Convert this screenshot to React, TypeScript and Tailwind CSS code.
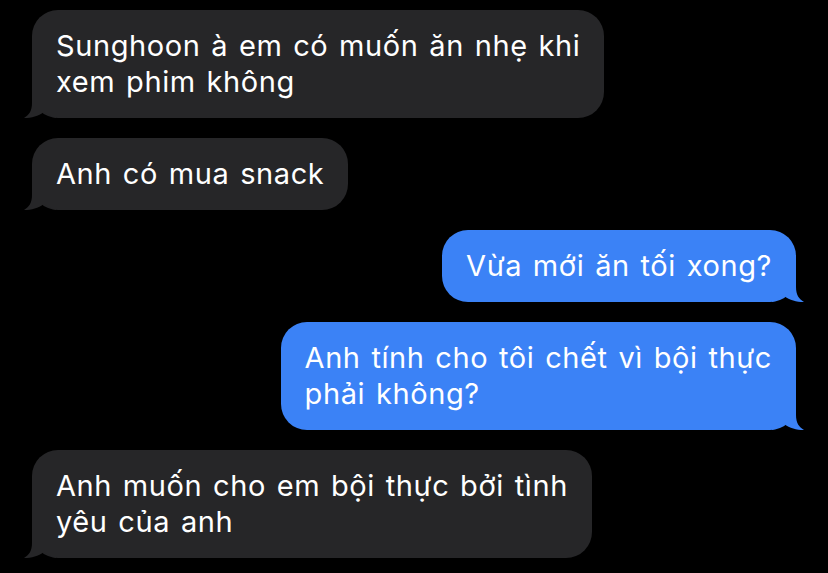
// iMessage-style dark chat thread

type Msg = { from: "them" | "me"; text: string[] };

const messages: Msg[] = [
  { from: "them", text: ["Sunghoon à em có muốn ăn nhẹ khi", "xem phim không"] },
  { from: "them", text: ["Anh có mua snack"] },
  { from: "me", text: ["Vừa mới ăn tối xong?"] },
  { from: "me", text: ["Anh tính cho tôi chết vì bội thực", "phải không?"] },
  { from: "them", text: ["Anh muốn cho em bội thực bởi tình", "yêu của anh"] },
];

function Tail({ color, flip }: { color: string; flip?: boolean }) {
  return (
    <svg
      width="32"
      height="32"
      viewBox="0 0 32 32"
      className={
        flip
          ? "absolute -right-2 bottom-0 -scale-x-100"
          : "absolute -left-2 bottom-0"
      }
    >
      <path
        d="M8 0 L8 17 C8 25 5 29 0 32 C8 32 14 30 20 26 C24 29 28 31 32 32 L32 0 Z"
        fill={color}
      />
    </svg>
  );
}

function Bubble({ msg }: { msg: Msg }) {
  const mine = msg.from === "me";
  const color = mine ? "#3b82f6" : "#262628";
  return (
    <div className={mine ? "flex justify-end pr-8" : "flex justify-start pl-8"}>
      <div
        className={
          mine
            ? "relative rounded-[26px] bg-[#3b82f6] px-6 py-[18px]"
            : "relative rounded-[26px] bg-[#262628] px-6 py-[18px]"
        }
      >
        <Tail color={color} flip={mine} />
        <div className="relative text-[29px] leading-[36px] tracking-[0.6px] [word-spacing:2px] text-white">
          {msg.text.map((line) => (
            <div key={line} className="whitespace-nowrap">
              {line}
            </div>
          ))}
        </div>
      </div>
    </div>
  );
}

export default function App() {
  return (
    <div
      className="flex h-[573px] w-[828px] flex-col gap-5 overflow-hidden bg-black pt-[10px]"
      style={{ fontFamily: "Inter, 'Noto Sans', sans-serif" }}
    >
      {messages.map((m, i) => (
        <Bubble key={i} msg={m} />
      ))}
    </div>
  );
}
